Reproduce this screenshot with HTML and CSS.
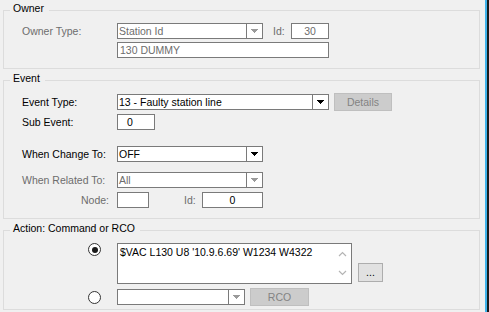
FILE: index.html
```html
<!DOCTYPE html>
<html>
<head>
<meta charset="utf-8">
<link rel="stylesheet" href="styles.css">
</head>
<body>
<div class="window">
  <div class="main">
    <section class="group owner">
      <div class="group-title">Owner</div>
      <div class="row r-owner1">
        <span class="label dis">Owner Type:</span>
        <div class="combo dis w146">
          <span class="val">Station Id</span>
          <span class="btn"><svg width="7" height="5" viewBox="0 0 7 5"><path d="M0 0h7v1h-1v1h-1v1h-1v1h-1v-1h-1v-1h-1v-1h-1z" fill="#9a9a9a"/></svg></span>
        </div>
        <span class="small-label dis">Id:</span>
        <div class="edit dis w38 center">30</div>
      </div>
      <div class="row r-owner2">
        <span class="label"></span>
        <div class="edit dis w212">130 DUMMY</div>
      </div>
    </section>

    <section class="group event">
      <div class="group-title">Event</div>
      <div class="row r-type">
        <span class="label">Event Type:</span>
        <div class="combo w212">
          <span class="val">13 - Faulty station line</span>
          <span class="btn"><svg width="7" height="5" viewBox="0 0 7 5"><path d="M0 0h7v1h-1v1h-1v1h-1v1h-1v-1h-1v-1h-1v-1h-1z" fill="#000"/></svg></span>
        </div>
        <button class="pbtn disabled w58">Details</button>
      </div>
      <div class="row r-sub">
        <span class="label">Sub Event:</span>
        <div class="edit w38 pad9">0</div>
      </div>
      <div class="row r-change">
        <span class="label">When Change To:</span>
        <div class="combo w146">
          <span class="val">OFF</span>
          <span class="btn"><svg width="7" height="5" viewBox="0 0 7 5"><path d="M0 0h7v1h-1v1h-1v1h-1v1h-1v-1h-1v-1h-1v-1h-1z" fill="#000"/></svg></span>
        </div>
      </div>
      <div class="row r-related">
        <span class="label dis">When Related To:</span>
        <div class="combo dis w146">
          <span class="val">All</span>
          <span class="btn"><svg width="7" height="5" viewBox="0 0 7 5"><path d="M0 0h7v1h-1v1h-1v1h-1v1h-1v-1h-1v-1h-1v-1h-1z" fill="#9a9a9a"/></svg></span>
        </div>
      </div>
      <div class="row r-node">
        <span class="label dis right">Node:</span>
        <div class="edit w32"></div>
        <span class="small-label dis id2">Id:</span>
        <div class="edit w61 center">0</div>
      </div>
    </section>

    <section class="group action">
      <div class="group-title">Action: Command or RCO</div>
      <div class="row r-cmd">
        <span class="label"><span class="radio on"></span></span>
        <div class="memo">
          <span class="memo-text">$VAC L130 U8 '10.9.6.69' W1234 W4322</span>
          <span class="scroll">
            <svg width="9" height="6" viewBox="0 0 9 6"><path d="M1 5L4.5 1.5L8 5" fill="none" stroke="#b4b4b4" stroke-width="1.2"/></svg>
            <svg width="9" height="6" viewBox="0 0 9 6"><path d="M1 1L4.5 4.5L8 1" fill="none" stroke="#b4b4b4" stroke-width="1.2"/></svg>
          </span>
        </div>
        <button class="pbtn dots">...</button>
      </div>
      <div class="row r-rco">
        <span class="label"><span class="radio"></span></span>
        <div class="combo w128">
          <span class="val"></span>
          <span class="btn"><svg width="7" height="5" viewBox="0 0 7 5"><path d="M0 0h7v1h-1v1h-1v1h-1v1h-1v-1h-1v-1h-1v-1h-1z" fill="#9a9a9a"/></svg></span>
        </div>
        <button class="pbtn disabled w59">RCO</button>
      </div>
    </section>
  </div>
  <div class="edge-blue"></div>
  <div class="edge-dark"></div>
</div>
</body>
</html>
```
FILE: styles.css
```css
* { box-sizing: border-box; }
html, body { margin: 0; padding: 0; }
body {
  background: #f0f0f0;
  font-family: "Liberation Sans", Arial, sans-serif;
  font-size: 10.5px;
  color: #000;
  width: 489px;
  height: 312px;
  overflow: hidden;
}
.window { display: flex; height: 312px; }
.main { width: 485px; padding: 10px 0 0 3px; }
.edge-blue { width: 2px; background: #3fb2ea; }
.edge-dark { width: 2px; background: #1c1c1c; }

.group {
  width: 477px;
  border: 1px solid #dcdcdc;
  padding: 0 0 0 18px;
}
.group-title {
  display: table;
  margin: -8px 0 0 -12px;
  padding: 0 5px 0 3px;
  line-height: 11px;
  height: 11px;
  background: #f0f0f0;
  white-space: nowrap;
}
.owner { padding-bottom: 10px; }
.event { margin-top: 11px; padding-bottom: 10px; }
.action { margin-top: 11px; padding-bottom: 3px; }

.row { display: flex; align-items: center; }
.label { width: 95px; flex: none; white-space: nowrap; line-height: 14px; }
.label.right { text-align: right; padding-right: 8px; }
.dis { color: #6d6d6d; }
.small-label { width: 18px; flex: none; margin-left: 10px; line-height: 14px; }
.small-label.id2 { margin-left: 35px; }

.r-owner1 { margin-top: 9px; }
.r-owner2 { margin-top: 3px; }
.r-type { margin-top: 9px; height: 18px; }
.r-sub { margin-top: 3px; }
.r-change { margin-top: 16px; }
.r-related { margin-top: 10px; }
.r-node { margin-top: 4px; }
.r-cmd { margin-top: 9px; align-items: flex-start; }
.r-rco { margin-top: 4px; height: 18px; }

.edit, .combo {
  height: 16px;
  border: 1px solid #7a7a7a;
  background: #fff;
  line-height: 14px;
  padding: 0 2px;
  white-space: nowrap;
  flex: none;
}
.edit.dis, .combo.dis .val { color: #6d6d6d; }
.center { text-align: center; }
.pad9 { padding-left: 9px; }
.w32 { width: 32px; }
.w38 { width: 38px; }
.w61 { width: 61px; }
.w128 { width: 128px; }
.w146 { width: 146px; }
.w212 { width: 212px; }

.combo { display: flex; padding: 0; }
.combo .val { flex: 1; padding-left: 1px; overflow: hidden; }
.combo .btn {
  width: 16px;
  height: 14px;
  border-left: 1px solid #7a7a7a;
  display: flex;
  align-items: center;
  justify-content: center;
  padding-top: 1px;
}
.combo .btn svg { display: block; }

.pbtn {
  font: inherit;
  height: 18px;
  padding: 0;
  border: 1px solid #adadad;
  background: #e1e1e1;
  color: #000;
  line-height: 16px;
  flex: none;
}
.pbtn.disabled {
  background: #cccccc;
  border-color: #bfbfbf;
  color: #838383;
}
.r-type .pbtn { margin-left: 5px; }
.w58 { width: 58px; }
.w59 { width: 59px; margin-left: 5px; }
.dots { width: 25px; height: 19px; margin: 20px 0 0 6px; line-height: 17px; }

.radio {
  display: block;
  width: 13px;
  height: 13px;
  margin-left: 66px;
  border: 1px solid #333;
  border-radius: 50%;
  background: #fff;
  position: relative;
}
.radio.on::after {
  content: "";
  position: absolute;
  left: 2.5px;
  top: 2.5px;
  width: 6px;
  height: 6px;
  border-radius: 50%;
  background: #1a1a1a;
}
.r-cmd .label { height: 13px; }

.memo {
  width: 235px;
  height: 41px;
  border: 1px solid #7a7a7a;
  background: #fff;
  display: flex;
  flex: none;
}
.memo-text { flex: 1; padding: 2px 0 0 2px; line-height: 13px; white-space: nowrap; overflow: hidden; }
.scroll {
  width: 17px;
  display: flex;
  flex-direction: column;
  justify-content: space-between;
  align-items: center;
  padding: 7px 0 7px 0;
}
.scroll svg { display: block; }
```
